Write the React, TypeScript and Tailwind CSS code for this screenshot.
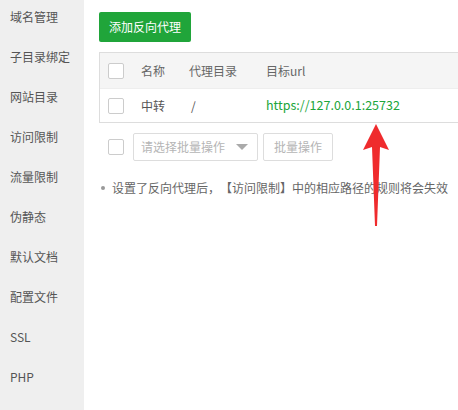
import React from "react";

const menu = ["域名管理", "子目录绑定", "网站目录", "访问限制", "流量限制", "伪静态", "默认文档", "配置文件", "SSL", "PHP"];

function Box() {
  return <div className="w-4 h-4 border border-[#cccccc] bg-white rounded-[2px]" />;
}

export default function App() {
  return (
    <div className="w-[458px] h-[410px] flex bg-white overflow-hidden [text-spacing-trim:space-all]" style={{ fontFamily: '"Noto Sans CJK SC", "Noto Sans", sans-serif' }}>
      <div className="w-[84px] h-full bg-[#efefef] flex flex-col pt-[7px]">
        {menu.map((m) => (
          <div key={m} className="h-[40px] pl-[10px] text-[12px] leading-[20px] text-[#555]">
            {m}
          </div>
        ))}
      </div>
      <div className="flex-1 relative pl-[15px] pt-[12px]">
        <button className="h-[30px] px-[10px] bg-[#20a53a] text-white text-[12px] rounded-[2px] leading-[30px]">添加反向代理</button>
        <div className="mt-[10px] border-l border-t border-b border-[#dddddd] text-[12px]">
          <div className="h-[36px] bg-[#f5f5f5] flex items-center border-b border-[#eeeeee] text-[#666]">
            <div className="w-[41px] pl-[8px]"><Box /></div>
            <div className="w-[48px]">名称</div>
            <div className="w-[77px]">代理目录</div>
            <div>目标url</div>
          </div>
          <div className="h-[33px] flex items-center text-[#555]">
            <div className="w-[41px] pl-[8px]"><Box /></div>
            <div className="w-[48px]">中转</div>
            <div className="w-[77px] pl-[2px]">/</div>
            <div className="text-[#20a53a] text-[12.5px]">https://127.0.0.1:25732</div>
          </div>
        </div>
        <div className="mt-[10px] flex items-center">
          <div className="w-[34px] pl-[9px]"><Box /></div>
          <div className="w-[125px] h-[28px] border border-[#dddddd] rounded-[2px] flex items-center px-[7px] text-[12px] text-[#b5b5b5]">
            <span className="flex-1">请选择批量操作</span>
            <span className="w-0 h-0 border-l-[6px] border-r-[6px] border-t-[6px] border-l-transparent border-r-transparent border-t-[#aaaaaa] mr-[2px]" />
          </div>
          <div className="ml-[5px] w-[70px] h-[28px] border border-[#dddddd] rounded-[2px] flex items-center justify-center text-[12px] text-[#b5b5b5]">批量操作</div>
        </div>
        <div className="mt-[18px] pl-[1px] flex items-center text-[12px] text-[#666] whitespace-nowrap">
          <span className="w-[4px] h-[4px] rounded-full bg-[#999] mr-[7px] ml-[1px]" />
          <span>设置了反向代理后，【访问限制】中的相应路径的规则将会失效</span>
        </div>
        <svg className="absolute left-[278px] top-[122px]" width="28" height="106" viewBox="0 0 28 106">
          <polygon points="14,2 1,28 10,25 13,104 15,104 18,25 27,28" fill="#ef2b2d" />
        </svg>
      </div>
    </div>
  );
}
